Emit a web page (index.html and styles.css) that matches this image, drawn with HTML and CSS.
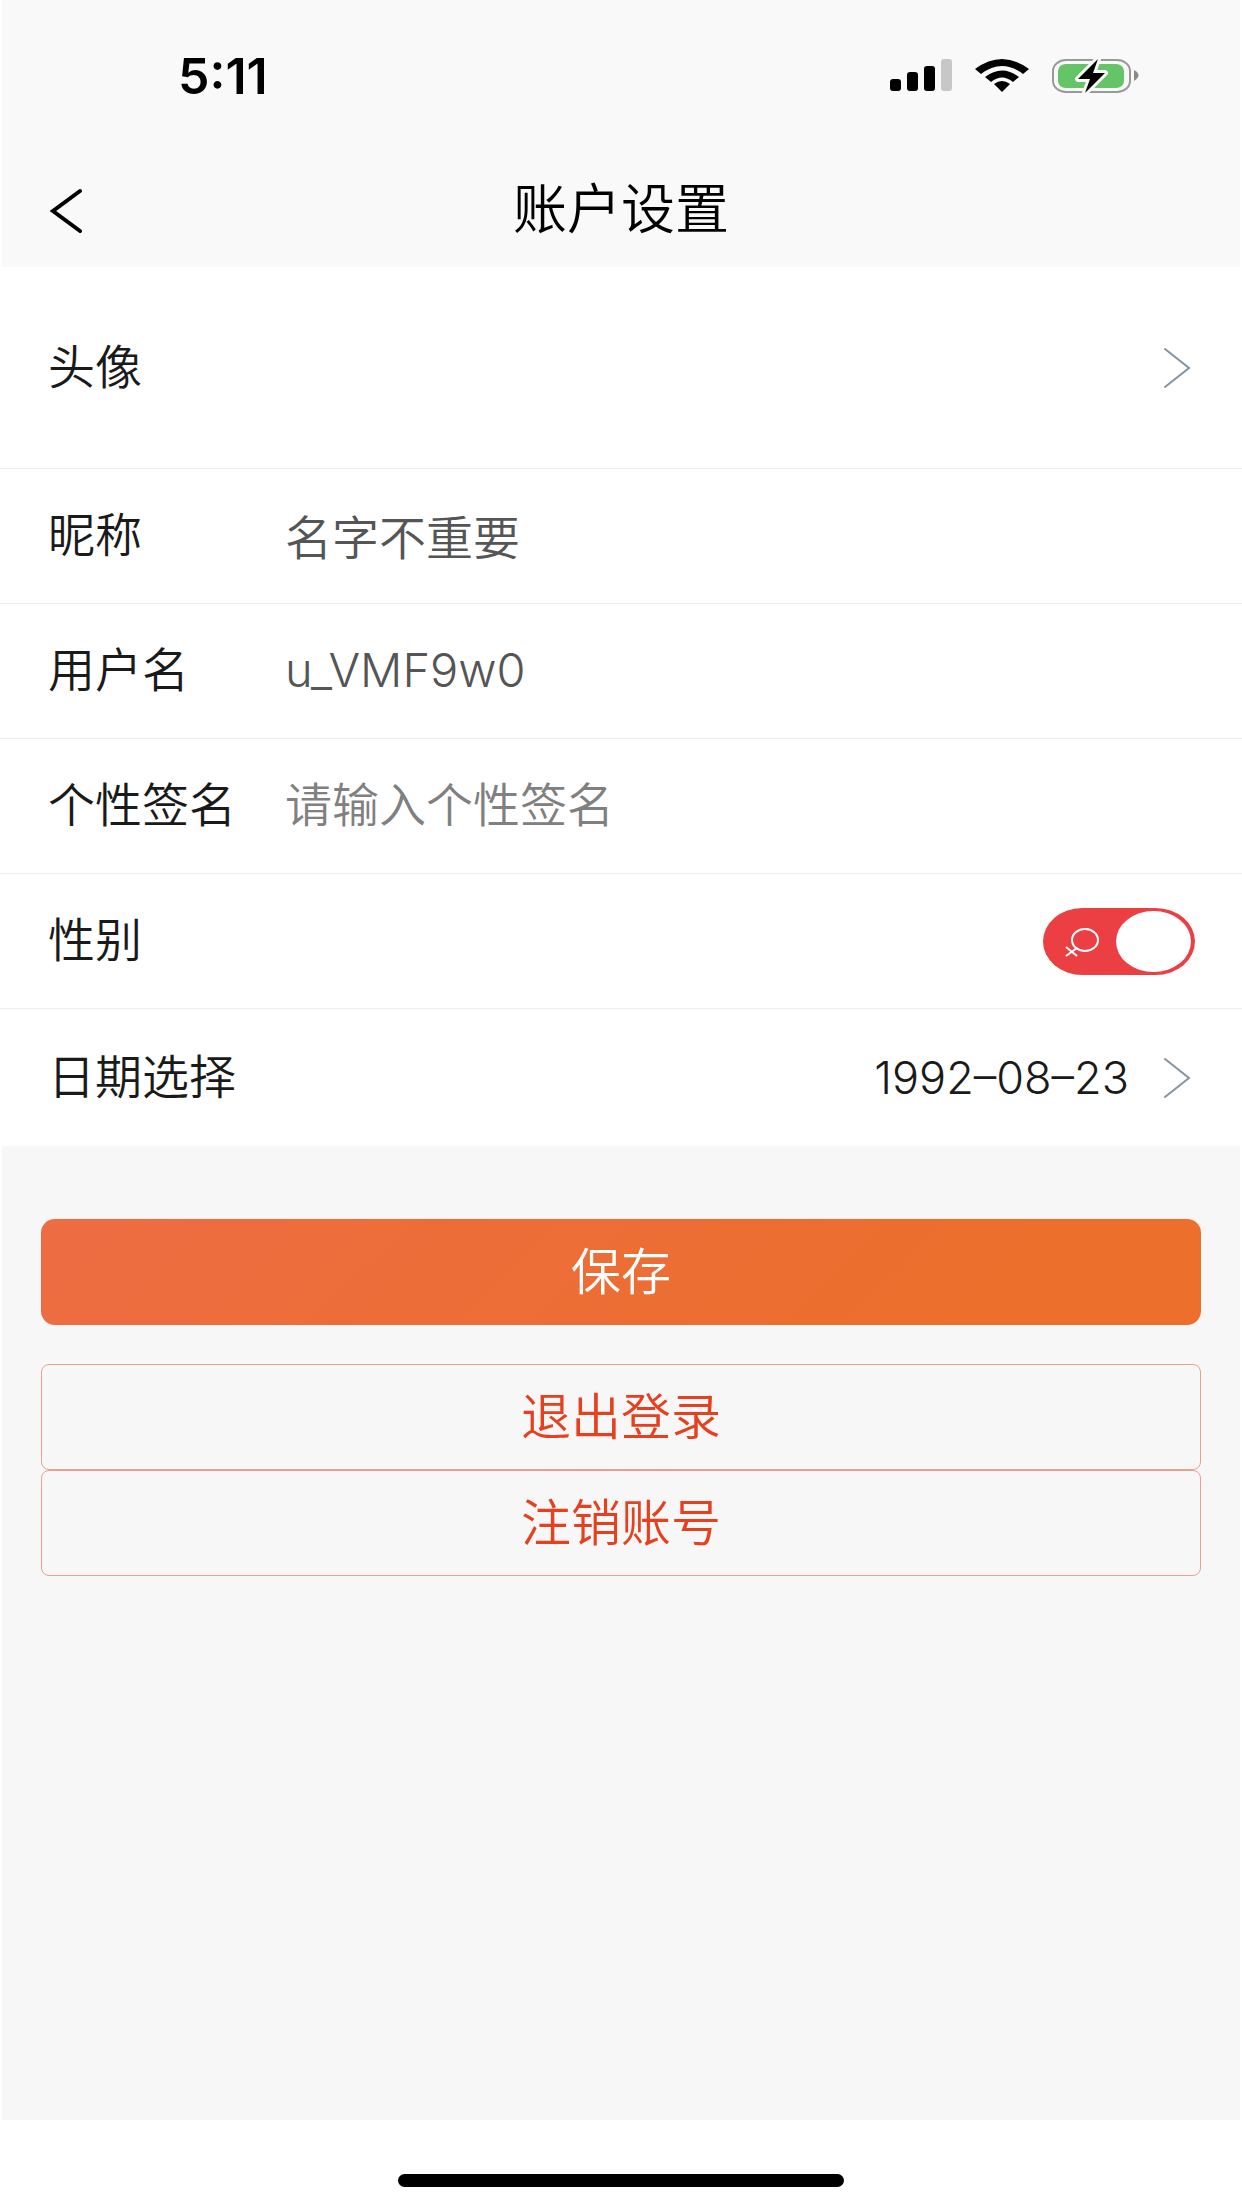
FILE: index.html
```html
<!DOCTYPE html>
<html lang="zh-CN">
<head>
  <meta charset="UTF-8" />
  <meta name="viewport" content="width=device-width, initial-scale=1" />
  <title>账户设置</title>
  <link rel="stylesheet" href="styles.css">
</head>
<body>

  <div class="page">
    <header class="header">
      <div class="status-bar">
        <span class="time">5:11</span>
        <div class="status-icons">
          <svg width="62" height="36" viewBox="0 0 62 36">
            <rect x="0" y="21" width="11" height="12" rx="3" />
            <rect x="17" y="14" width="11" height="19" rx="3" />
            <rect x="34" y="8" width="11" height="25" rx="3" />
            <rect x="51" y="1" width="11" height="32" rx="3" fill="#c7c7c7" />
          </svg>
          <svg width="54" height="36" viewBox="0 0 54 36">
            <path d="M0 11 Q27 -9 54 11 L48 16 Q27 0 6 16 Z" />
            <path d="M10 19 Q27 6 44 19 L38 24 Q27 15 16 24 Z" />
            <path d="M19 26 Q27 20 35 26 L27 34 Z" />
          </svg>
          <svg width="88" height="36" viewBox="0 0 88 36">
            <rect x="1" y="2" width="77" height="32" rx="13" ry="11" fill="none" stroke="#999" stroke-width="2" />
            <rect x="6" y="6" width="66" height="24" rx="8" ry="7" fill="#65c466" />
            <path d="M82 12 Q91 17 82 23 Z" fill="#8a8a8a" />
            <path class="bolt" d="M46 1 L26 21 H38 L33 35 L53 15 H41 Z" />
          </svg>
        </div>
      </div>

      <div class="nav-bar">
        <button class="back" type="button" aria-label="返回">
          <svg width="34" height="46" viewBox="0 0 34 46">
            <path d="M31 4 L4 24 L31 44" />
          </svg>
        </button>
        <h1>账户设置</h1>
      </div>
    </header>

    <main class="content">
      <form class="list">
        <div class="row row-avatar">
          <span class="label" id="avatarLabel">头像</span>
          <button class="picker" type="button" aria-labelledby="avatarLabel">
            <svg class="arrow" width="28" height="42" viewBox="0 0 28 42">
              <path d="M2 2 L26 21 L2 40" />
            </svg>
          </button>
        </div>

        <div class="row">
          <label class="label" for="nickname">昵称</label>
          <input class="field" type="text" id="nickname" value="名字不重要" />
        </div>

        <div class="row">
          <label class="label" for="username">用户名</label>
          <input class="field" type="text" id="username" value="u_VMF9w0" />
        </div>

        <div class="row">
          <label class="label" for="signature">个性签名</label>
          <input class="field" type="text" id="signature" placeholder="请输入个性签名" />
        </div>

        <div class="row">
          <label class="label" for="gender">性别</label>
          <div class="switch">
            <input type="checkbox" id="gender" checked />
            <svg class="female" width="34" height="30" viewBox="0 0 34 30">
              <ellipse cx="20" cy="13" rx="13" ry="11" />
              <path d="M12 21 L1 29 M1 20 L12 29" />
            </svg>
          </div>
        </div>

        <div class="row row-date">
          <span class="label" id="dateLabel">日期选择</span>
          <button class="picker" type="button" aria-describedby="dateLabel">
            <span>1992–08–23</span>
            <svg class="arrow" width="28" height="42" viewBox="0 0 28 42">
              <path d="M2 2 L26 21 L2 40" />
            </svg>
          </button>
        </div>
      </form>

      <div class="actions">
        <button class="btn btn-save" type="button">保存</button>
        <button class="btn btn-line" type="button">退出登录</button>
        <button class="btn btn-line" type="button">注销账号</button>
      </div>
    </main>

    <footer class="home-bar">
      <div class="indicator"></div>
    </footer>
  </div>

</body>
</html>
```
FILE: styles.css
```css
* {
  box-sizing: border-box;
}

body {
  margin: 0;
  background: #fff;
  color: #1a1a1a;
  font-family: Inter, "Noto Sans CJK SC", sans-serif;
  font-size: 47px;
  font-weight: 350;
}

button, input {
  font-family: inherit;
  font-size: inherit;
  font-weight: inherit;
  color: inherit;
  border: none;
  background: none;
  padding: 0;
  margin: 0;
}

button {
  cursor: pointer;
}

svg {
  display: block;
}

.page {
  display: flex;
  flex-direction: column;
  min-height: 100vh;
  padding: 0 2px;
}

/* header */
.header {
  background: #f9f9f9;
  color: #000;
}

.status-bar {
  display: flex;
  justify-content: space-between;
  align-items: center;
  height: 152px;
  padding: 0 100px 0 176px;
}

.time {
  font-size: 50px;
  font-weight: 600;
}

.status-icons {
  display: flex;
  align-items: center;
  gap: 23px;
}

.bolt {
  stroke: #f9f9f9;
  stroke-width: 6px;
  stroke-linejoin: round;
  paint-order: stroke;
}

.nav-bar {
  display: grid;
  grid-template-columns: 128px 1fr 128px;
  align-items: center;
  height: 115px;
}

.back {
  justify-self: center;
}

.back path {
  fill: none;
  stroke: #000;
  stroke-width: 4px;
  stroke-linecap: round;
}

h1 {
  margin: 0;
  font-size: 54px;
  font-weight: 350;
  line-height: 64px;
  text-align: center;
}

/* list */
.content {
  flex: 1;
  background: #f7f7f7;
}

.list {
  margin: 0 -2px;
  background: #fff;
}

.row {
  display: flex;
  align-items: center;
  min-height: 135px;
  padding: 0 47px 0 48px;
  border-bottom: 1px solid #eee;
}

.row-avatar {
  min-height: 202px;
}

.row-date {
  min-height: 137px;
  border-bottom: none;
}

.label {
  width: 237px;
  padding-bottom: 2px;
  line-height: 64px;
}

.field {
  flex: 1;
  min-width: 0;
  height: 68px;
  padding-bottom: 4px;
  color: #555;
  outline: none;
}

.field::placeholder {
  color: #808080;
  opacity: 1;
}

.picker {
  display: flex;
  align-items: center;
  gap: 34px;
  margin-left: auto;
  padding-right: 4px;
  font-size: 45px;
}

.arrow path {
  fill: none;
  stroke: #8494a0;
  stroke-width: 2px;
  stroke-linecap: round;
}

.switch {
  position: relative;
  margin-left: auto;
}

.switch input {
  display: flex;
  justify-content: flex-end;
  appearance: none;
  width: 152px;
  height: 67px;
  padding: 3px 4px;
  border-radius: 40px / 34px;
  background: #eb3f43;
  cursor: pointer;
}

.switch input::before {
  content: "";
  width: 75px;
  border-radius: 50%;
  background: #fff;
}

.female {
  position: absolute;
  left: 22px;
  top: 19px;
  fill: none;
  stroke: #fff;
  stroke-width: 2px;
  pointer-events: none;
}

/* buttons */
.actions {
  display: flex;
  flex-direction: column;
  padding: 73px 39px;
}

.btn {
  height: 106px;
  padding-bottom: 8px;
  font-size: 50px;
}

.btn-save {
  margin-bottom: 39px;
  border-radius: 14px;
  background: linear-gradient(135deg, #ee6c43, #ec6f2c 80%);
  color: #fff;
}

.btn-line {
  border: 1px solid #eda08f;
  border-radius: 8px;
  color: #e6401f;
}

/* bottom */
.home-bar {
  display: flex;
  justify-content: center;
  height: 88px;
  padding-top: 54px;
}

.indicator {
  width: 36%;
  height: 13px;
  border-radius: 8px;
  background: #000;
}
```
